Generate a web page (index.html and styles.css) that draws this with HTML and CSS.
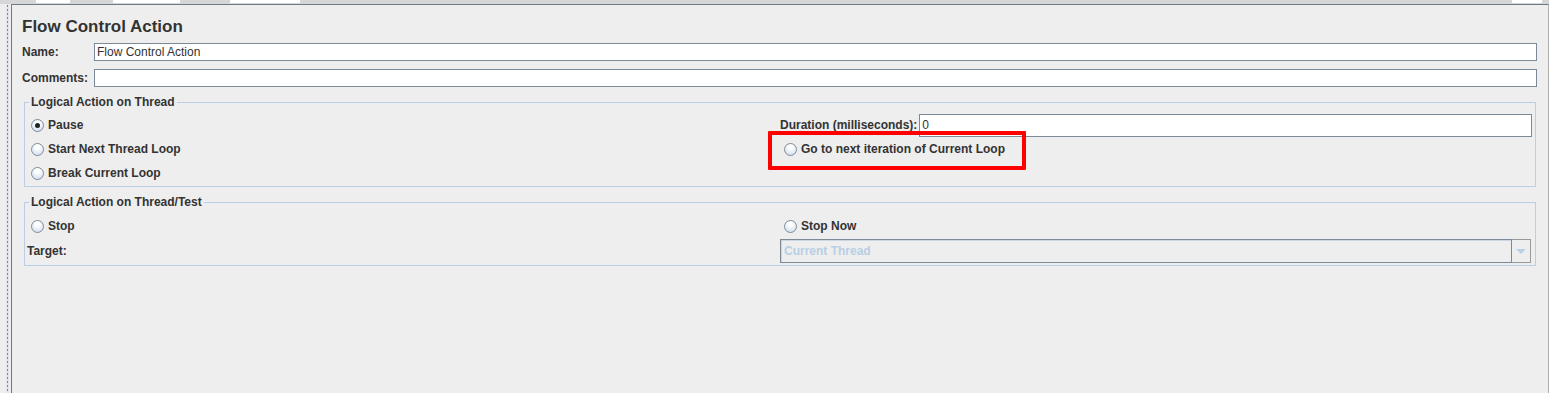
FILE: index.html
```html
<!DOCTYPE html>
<html lang="en">
<head>
    <meta charset="UTF-8">
    <title>Flow Control Action</title>
    <link rel="stylesheet" href="styles.css">
</head>
<body>
    <div class="tabs">
        <span class="tab t1"></span>
        <span class="tab t2"></span>
        <span class="tab t3"></span>
        <span class="tab t4"></span>
    </div>
    <div class="frame">
        <div class="splitter"><div class="dots"></div></div>
        <div class="panel">
            <h1>Flow Control Action</h1>

            <div class="field-row">
                <label class="field-label">Name:</label>
                <div class="text-input">Flow Control Action</div>
            </div>
            <div class="field-row">
                <label class="field-label">Comments:</label>
                <div class="text-input"></div>
            </div>

            <fieldset class="group first">
                <legend>Logical Action on Thread</legend>
                <div class="cols">
                    <div class="col">
                        <div class="option"><span class="radio checked"></span>Pause</div>
                        <div class="option"><span class="radio"></span>Start Next Thread Loop</div>
                        <div class="option"><span class="radio"></span>Break Current Loop</div>
                    </div>
                    <div class="col">
                        <div class="duration">
                            <span class="label">Duration (milliseconds):</span>
                            <div class="text-input tall">0</div>
                        </div>
                        <div class="option highlighted"><span class="radio"></span>Go to next iteration of Current Loop</div>
                    </div>
                </div>
            </fieldset>

            <fieldset class="group second">
                <legend>Logical Action on Thread/Test</legend>
                <div class="cols">
                    <div class="col">
                        <div class="option"><span class="radio"></span>Stop</div>
                        <div class="target-label">Target:</div>
                    </div>
                    <div class="col">
                        <div class="option"><span class="radio"></span>Stop Now</div>
                        <div class="combo">
                            <div class="combo-value">Current Thread</div>
                            <div class="combo-button"><span class="arrow"></span></div>
                        </div>
                    </div>
                </div>
            </fieldset>
        </div>
    </div>
</body>
</html>
```

FILE: styles.css
```css
body {
    margin: 0;
    background: #eeeeee;
    font-family: "Liberation Sans", Arial, sans-serif;
    font-size: 12px;
    font-weight: bold;
    color: #333333;
    overflow: hidden;
}

.tabs {
    height: 4px;
    background: #d6d6d6;
    position: relative;
}

.tab {
    position: absolute;
    top: 0;
    height: 3px;
    background: #ffffff;
}

.t1 { left: 36px; width: 34px; }
.t2 { left: 113px; width: 67px; }
.t3 { left: 230px; width: 70px; }
.t4 { left: 1512px; width: 30px; }

.frame {
    display: flex;
    height: 389px;
}

.splitter {
    width: 11px;
    border-right: 1px solid #6f7a85;
    background: #eeeeee;
    display: flex;
    justify-content: center;
}

.dots {
    width: 3px;
    margin-left: 4px;
    background-image: radial-gradient(circle, #7d8b99 0.8px, transparent 1px);
    background-size: 3px 4px;
    background-color: #e2e6ea;
}

.panel {
    flex: 1;
    border-top: 1px solid #6f7a85;
    border-right: 1px solid #b0b0b0;
    padding: 0 10px 0 10px;
}

h1 {
    margin: 11px 0 6px 0;
    font-size: 17px;
    line-height: 21px;
    color: #333333;
}

.field-row {
    display: flex;
    align-items: center;
    height: 18px;
    margin-bottom: 8px;
}

.field-label {
    width: 72px;
}

.text-input {
    flex: 1;
    height: 16px;
    line-height: 16px;
    border: 1px solid #7a8a99;
    background: #ffffff;
    font-weight: normal;
    padding-left: 2px;
    margin-right: 1px;
}

.text-input.tall {
    height: 21px;
    line-height: 21px;
}

.group {
    margin: 0 2px 0 2px;
    padding: 4px 2px 1px 2px;
    border: 1px solid #b8cfe5;
}

.group legend {
    padding: 0 2px;
    margin-left: 2px;
    line-height: 14px;
}

.group.first {
    margin-top: 2px;
}

.group.second {
    margin-top: 8px;
    padding-top: 5px;
    padding-bottom: 2px;
}

.cols {
    display: grid;
    grid-template-columns: 1fr 1fr;
}

.option {
    display: flex;
    align-items: center;
    height: 24px;
}

.radio {
    width: 11px;
    height: 11px;
    border: 1px solid #7f8c99;
    border-radius: 50%;
    background: radial-gradient(circle at 50% 25%, #ffffff 20%, #c9d8ea 100%);
    margin: 0 4px 0 4px;
    position: relative;
}

.radio.checked::after {
    content: "";
    position: absolute;
    left: 3px;
    top: 3px;
    width: 5px;
    height: 5px;
    border-radius: 50%;
    background: #222222;
}

.duration {
    display: flex;
    align-items: center;
    height: 24px;
}

.duration .label {
    margin-right: 2px;
}

.highlighted {
    position: relative;
    width: fit-content;
    padding-right: 21px;
}

.highlighted::before {
    content: "";
    position: absolute;
    left: -12px;
    right: 0;
    top: -6px;
    bottom: -9px;
    border: 4px solid #ff0000;
    border-radius: 1px;
}

.target-label {
    height: 24px;
    line-height: 26px;
}

.combo {
    display: flex;
    height: 24px;
    margin-top: 1px;
    margin-right: 2px;
}

.combo-value {
    flex: 1;
    border: 1px solid #7a8a99;
    box-shadow: inset 1px 1px 0 #c9d6e3;
    padding-left: 3px;
    line-height: 22px;
    color: #b8cfe5;
}

.combo-button {
    width: 18px;
    border: 1px solid #999999;
    border-left: none;
    display: flex;
    align-items: center;
    justify-content: center;
}

.arrow {
    width: 0;
    height: 0;
    border-left: 5px solid transparent;
    border-right: 5px solid transparent;
    border-top: 5px solid #b8cfe5;
}
```
